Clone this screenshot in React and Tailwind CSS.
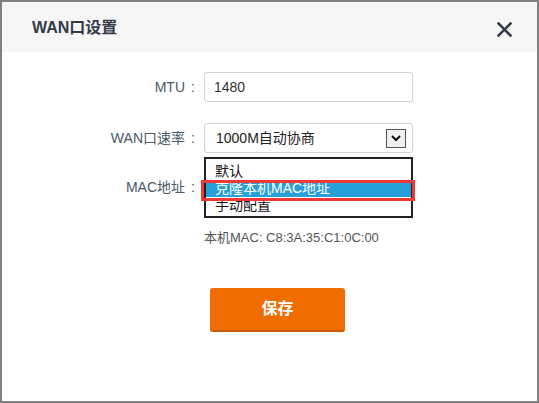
const font = { fontFamily: '"Liberation Sans", "Noto Sans CJK SC", sans-serif' };

function FormRow({ label, children }) {
  return (
    <div className="flex items-center h-[30px]">
      <div className="w-[202px] flex justify-end pr-[3px] text-[14px] text-[#4b5a66]">
        <span>{label}</span>
        <span className="w-[16px] text-center">:</span>
      </div>
      <div className="relative w-[209px] h-[30px]">{children}</div>
    </div>
  );
}

export default function App() {
  return (
    <div className="w-[539px] h-[403px] border-2 border-[#808080] bg-white overflow-hidden" style={font}>
      <div className="h-[50px] bg-[#f6f6f6] flex items-center justify-between pl-[30px] pr-[25px]">
        <h1 className="text-[16px] font-bold text-[#333a46] mt-[1px]">WAN口设置</h1>
        <svg width="15" height="15" viewBox="0 0 15 15" className="mt-[4px]">
          <path d="M1.5 1.5 L13.5 13.5 M13.5 1.5 L1.5 13.5" stroke="#333a46" strokeWidth="2.5" strokeLinecap="square" />
        </svg>
      </div>

      <div className="pt-[20px] flex flex-col">
        <FormRow label="MTU">
          <div className="h-full border border-[#d0d0d0] rounded-[3px] flex items-center pl-[9px] text-[14px] text-[#333]">
            1480
          </div>
        </FormRow>

        <div className="mt-[21px]">
          <FormRow label="WAN口速率">
            <div className="h-full border border-[#d0d0d0] rounded-[3px] flex items-center justify-between pl-[11px] pr-[6px] text-[14px] text-[#222]">
              <span>1000M自动协商</span>
              <span className="w-[20px] h-[19px] border border-[#555] bg-[#f0f0f0] flex items-center justify-center">
                <svg width="10" height="7" viewBox="0 0 10 7">
                  <path d="M1 1 L5 5 L9 1" fill="none" stroke="#111" strokeWidth="2" />
                </svg>
              </span>
            </div>
            <div className="absolute left-0 top-[34px] w-[209px] h-[61px] border-2 border-[#222] bg-white pt-[4px] text-[14px] z-10">
              <div className="h-[17px] leading-[17px] pl-[9px] text-[#111]">默认</div>
              <div className="h-[17px] leading-[17px] pl-[9px] bg-[#27a0da] text-white">克隆本机MAC地址</div>
              <div className="h-[17px] leading-[17px] pl-[9px] text-[#111]">手动配置</div>
              <div className="absolute left-[-5px] top-[21px] w-[214px] h-[21px] border-[3px] border-[#f03838]" />
            </div>
          </FormRow>
        </div>

        <div className="mt-[19px]">
          <FormRow label="MAC地址">
            <div className="h-full border border-[#d0d0d0] rounded-[3px]" />
          </FormRow>
        </div>

        <div className="ml-[202px] mt-[28px] h-[16px] leading-[16px] text-[13px] text-[#555]">
          本机MAC: C8:3A:35:C1:0C:00
        </div>

        <div className="ml-[208px] mt-[42px]">
          <button className="w-[135px] h-[44px] rounded-[3px] bg-[#ee6c00] border-b-2 border-[#c95800] text-white text-[16px] font-bold">
            保存
          </button>
        </div>
      </div>
    </div>
  );
}
